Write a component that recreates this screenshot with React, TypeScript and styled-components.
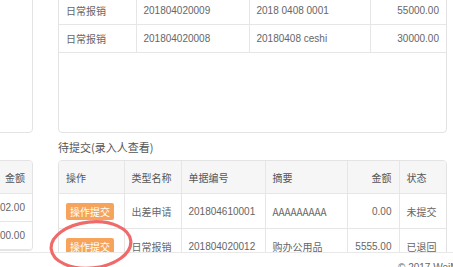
import React from "react";
import styled, { createGlobalStyle } from "styled-components";

const Global = createGlobalStyle`
  html, body { margin: 0; padding: 0; background: #fff; }
  body {
    font-family: "Liberation Sans", "Noto Sans CJK SC", Arial, sans-serif;
    color: #666;
    overflow: hidden;
  }
`;

const Page = styled.div`
  position: relative;
  width: 453px;
  height: 267px;
  overflow: hidden;
`;

const Main = styled.div`
  height: 252px;
  overflow: hidden;
  display: flex;
  flex-direction: column;
`;

const Row = styled.div<{ $top?: number }>`
  display: flex;
  align-items: flex-start;
  margin-top: ${(p) => p.$top ?? 0}px;
`;

const SideCol = styled.div`
  width: 233px;
  margin-left: -200px;
  flex: none;
`;

const MainCol = styled.div`
  width: 389px;
  margin-left: 25px;
  flex: none;
`;

const Panel = styled.div<{ $h?: number }>`
  box-sizing: border-box;
  border: 1px solid #e3e3e3;
  border-radius: 4px;
  background: #fff;
  height: ${(p) => (p.$h ? `${p.$h}px` : "auto")};
  overflow: hidden;
`;

const Title = styled.div`
  font-family: "Noto Sans CJK SC", "Liberation Sans", sans-serif;
  font-size: 11px;
  line-height: 16px;
  color: #555;
  height: 16px;
  margin: 6px 0 5px;
`;

const Table = styled.table`
  width: 100%;
  border-collapse: collapse;
  table-layout: fixed;
  font-size: 10px;
`;

const Th = styled.th<{ $right?: boolean; $last?: boolean }>`
  height: 32px;
  padding: 0 7px;
  background: #f6f6f6;
  font-weight: normal;
  color: #555;
  text-align: ${(p) => (p.$right ? "right" : "left")};
  border-right: ${(p) => (p.$last ? "none" : "1px solid #e6e6e6")};
  border-bottom: 1px solid #e6e6e6;
  font-family: "Noto Sans CJK SC", "Liberation Sans", sans-serif;
  white-space: nowrap;
  overflow: hidden;
`;

const Td = styled.td<{ $right?: boolean; $last?: boolean; $h?: number }>`
  height: ${(p) => p.$h ?? 27}px;
  padding: 0 7px;
  color: #666;
  text-align: ${(p) => (p.$right ? "right" : "left")};
  border-right: ${(p) => (p.$last ? "none" : "1px solid #e6e6e6")};
  border-bottom: 1px solid #e6e6e6;
  white-space: nowrap;
  overflow: hidden;
`;

const Spacer = styled.td`
  height: 0;
  padding: 0;
  border: none;
`;

const Cjk = styled.span`
  font-family: "Noto Sans CJK SC", sans-serif;
`;

const ActionButton = styled.span`
  display: inline-block;
  box-sizing: border-box;
  width: 48px;
  height: 17px;
  line-height: 17px;
  text-align: center;
  background: #f6a45b;
  color: #fff;
  border-radius: 2px;
  font-size: 10px;
  font-family: "Noto Sans CJK SC", sans-serif;
`;

const Footer = styled.div`
  box-sizing: border-box;
  height: 15px;
  border-top: 1px solid #e8e8e8;
  padding: 9px 0 0 398px;
  font-size: 10px;
  color: #666;
  white-space: nowrap;
`;

const Annotation = styled.svg`
  position: absolute;
  left: 48px;
  top: 219px;
  pointer-events: none;
`;

const topRows = [
  ["日常报销", "201804020009", "2018 0408 0001", "55000.00"],
  ["日常报销", "201804020008", "20180408 ceshi", "30000.00"],
];

const pending = [
  ["出差申请", "201804610001", "AAAAAAAAA", "0.00", "未提交"],
  ["日常报销", "201804020012", "购办公用品", "5555.00", "已退回"],
];

export default function App() {
  return (
    <Page>
      <Global />
      <Main>
        <Row $top={-4}>
          <SideCol>
            <Panel $h={137} />
          </SideCol>
          <MainCol>
            <Panel $h={137}>
              <Table>
                <colgroup>
                  <col style={{ width: 77 }} />
                  <col style={{ width: 113 }} />
                  <col style={{ width: 121 }} />
                  <col />
                </colgroup>
                <tbody>
                  <tr>
                    <Spacer colSpan={4} />
                  </tr>
                  {topRows.map((r, i) => (
                    <tr key={i}>
                      <Td $h={27}><Cjk>{r[0]}</Cjk></Td>
                      <Td $h={27}>{r[1]}</Td>
                      <Td $h={27}>{r[2]}</Td>
                      <Td $h={27} $right $last>{r[3]}</Td>
                    </tr>
                  ))}
                </tbody>
              </Table>
            </Panel>
          </MainCol>
        </Row>
        <Row>
          <SideCol>
            <Title />
            <Panel>
              <Table>
                <colgroup>
                  <col style={{ width: 160 }} />
                  <col />
                </colgroup>
                <thead>
                  <tr>
                    <Th />
                    <Th $right $last>金额</Th>
                  </tr>
                </thead>
                <tbody>
                  <tr>
                    <Td />
                    <Td $right $last>1002.00</Td>
                  </tr>
                  <tr>
                    <Td />
                    <Td $right $last>2000.00</Td>
                  </tr>
                </tbody>
              </Table>
            </Panel>
          </SideCol>
          <MainCol>
            <Title>待提交(录入人查看)</Title>
            <Panel>
              <Table>
                <colgroup>
                  <col style={{ width: 65 }} />
                  <col style={{ width: 57 }} />
                  <col style={{ width: 84 }} />
                  <col style={{ width: 82 }} />
                  <col style={{ width: 52 }} />
                  <col />
                </colgroup>
                <thead>
                  <tr>
                    <Th>操作</Th>
                    <Th>类型名称</Th>
                    <Th>单据编号</Th>
                    <Th>摘要</Th>
                    <Th $right>金额</Th>
                    <Th $last>状态</Th>
                  </tr>
                </thead>
                <tbody>
                  {pending.map((r, i) => (
                    <tr key={i}>
                      <Td $h={34}><ActionButton>操作提交</ActionButton></Td>
                      <Td $h={34}><Cjk>{r[0]}</Cjk></Td>
                      <Td $h={34}>{r[1]}</Td>
                      <Td $h={34}><Cjk>{r[2]}</Cjk></Td>
                      <Td $h={34} $right>{r[3]}</Td>
                      <Td $h={34} $last><Cjk>{r[4]}</Cjk></Td>
                    </tr>
                  ))}
                </tbody>
              </Table>
            </Panel>
          </MainCol>
        </Row>
      </Main>
      <Footer>© 2017 WeiMeng</Footer>
      <Annotation width="88" height="52" viewBox="0 0 88 52">
        <ellipse
          cx="43"
          cy="26"
          rx="40"
          ry="23"
          fill="none"
          stroke="#f06a6a"
          strokeWidth="3.2"
          transform="rotate(-6 43 26)"
        />
      </Annotation>
    </Page>
  );
}
